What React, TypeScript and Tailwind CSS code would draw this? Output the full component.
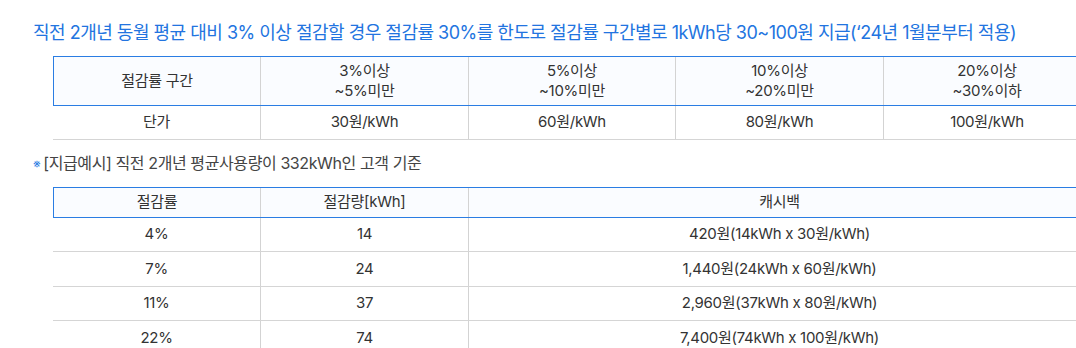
import React from "react";

const font = { fontFamily: 'Inter, "Noto Sans CJK KR", sans-serif' };

const ranges = [
  ["3%이상", "~5%미만"],
  ["5%이상", "~10%미만"],
  ["10%이상", "~20%미만"],
  ["20%이상", "~30%이하"],
];
const prices = ["30원/kWh", "60원/kWh", "80원/kWh", "100원/kWh"];

const rows = [
  ["4%", "14", "420원(14kWh x 30원/kWh)"],
  ["7%", "24", "1,440원(24kWh x 60원/kWh)"],
  ["11%", "37", "2,960원(37kWh x 80원/kWh)"],
  ["22%", "74", "7,400원(74kWh x 100원/kWh)"],
];

export default function App() {
  return (
    <div
      className="w-[1076px] h-[348px] overflow-hidden bg-white text-[#333]"
      style={font}
    >
      <div className="pl-[33px] pt-[20px]">
        <h2 className="text-[18px] leading-[26px] text-[#2274e0] whitespace-nowrap tracking-[-0.5px]">
          직전 2개년 동월 평균 대비 3% 이상 절감할 경우 절감률 30%를 한도로 절감률 구간별로 1kWh당 30~100원 지급(‘24년 1월분부터 적용)
        </h2>

        <div className="ml-[20px] mt-[10px] w-[1037px] text-[15px] tracking-[-0.3px]">
          {/* table 1 header */}
          <div className="grid grid-cols-[207px_208px_207px_208px_207px] border-y border-[#2a7de3] bg-[#fafcff] h-[50px]">
            <div className="border-l border-[#2a7de3] flex items-center justify-center">
              절감률 구간
            </div>
            {ranges.map((r, i) => (
              <div
                key={i}
                className="border-l border-[#d3d3d3] flex flex-col items-center justify-center leading-[20px]"
              >
                <span>{r[0]}</span>
                <span>{r[1]}</span>
              </div>
            ))}
          </div>
          {/* table 1 body */}
          <div className="grid grid-cols-[207px_208px_207px_208px_207px] border-b border-[#d5d5d5] h-[34px]">
            <div className="flex items-center justify-center">단가</div>
            {prices.map((p, i) => (
              <div
                key={i}
                className="border-l border-[#d3d3d3] flex items-center justify-center"
              >
                {p}
              </div>
            ))}
          </div>
        </div>

        <p className="mt-[12px] text-[16px] leading-[22px] text-[#444] whitespace-nowrap tracking-[-0.4px]">
          <span className="text-[#2a7de3] text-[12px] mr-[3px] align-[1px]">※</span>
          [지급예시] 직전 2개년 평균사용량이 332kWh인 고객 기준
        </p>

        <div className="ml-[20px] mt-[12px] w-[1037px] text-[15px] tracking-[-0.3px]">
          <div className="grid grid-cols-[207px_208px_622px] border-y border-[#2a7de3] bg-[#fafcff] h-[31px]">
            <div className="border-l border-[#2a7de3] flex items-center justify-center">
              절감률
            </div>
            <div className="border-l border-[#d3d3d3] flex items-center justify-center">
              절감량[kWh]
            </div>
            <div className="border-l border-[#d3d3d3] flex items-center justify-center">
              캐시백
            </div>
          </div>
          {rows.map((r, i) => (
            <div
              key={i}
              className={`grid grid-cols-[207px_208px_622px] border-b border-[#d5d5d5] ${
                i % 2 === 0 ? "h-[34px]" : "h-[35px]"
              }`}
            >
              <div className="flex items-center justify-center">{r[0]}</div>
              <div className="border-l border-[#d3d3d3] flex items-center justify-center">
                {r[1]}
              </div>
              <div className="border-l border-[#d3d3d3] flex items-center justify-center">
                {r[2]}
              </div>
            </div>
          ))}
        </div>
      </div>
    </div>
  );
}
